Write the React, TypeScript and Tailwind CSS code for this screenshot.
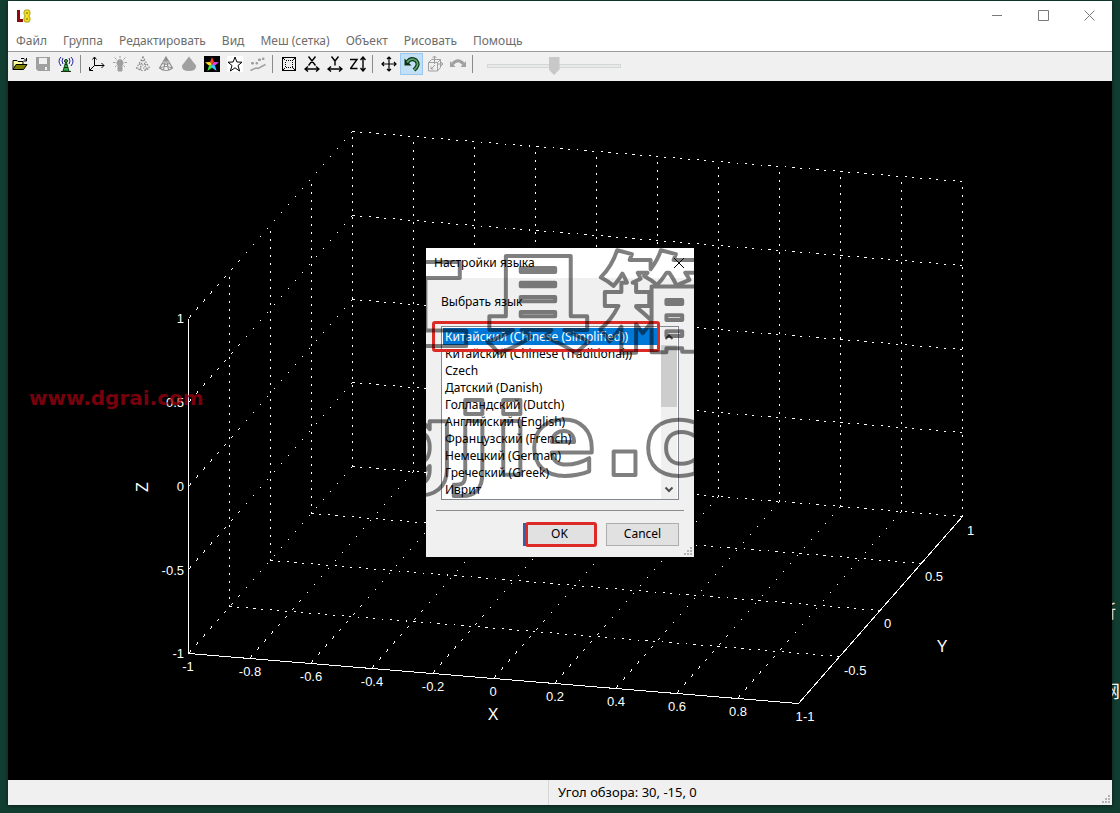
import { useState, type ReactNode } from 'react';
import clsx from 'clsx';

const MENU = ['Файл', 'Группа', 'Редактировать', 'Вид', 'Меш (сетка)', 'Объект', 'Рисовать', 'Помощь'];

const LANGUAGES = [
  'Китайский (Chinese (Simplified))',
  'Китайский (Chinese (Traditional))',
  'Czech',
  'Датский (Danish)',
  'Голландский (Dutch)',
  'Английский (English)',
  'Французский (French)',
  'Немецкий (German)',
  'Греческий (Greek)',
  'Иврит',
];

interface Tool {
  id: string;
  label: string;
  icon: ReactNode;
  active?: boolean;
}

const STAR = 'M8 1 L9.9 6 L15 6.2 L11 9.5 L12.6 15 L8 11.8 L3.4 15 L5 9.5 L1 6.2 L6.1 6 Z';

const TOOL_GROUPS: Tool[][] = [
  [
    {
      id: 'open',
      label: 'Открыть',
      icon: (
        <g stroke="#000">
          <path d="M1 13.5V4.5H5L6 5.5H11V8" fill="#ffff9c" />
          <path d="M1 13.5L4 8.5H15L11.500 13.500Z" fill="#808000" />
          <path d="M9 2.500H12L14 4.500M14.500 2V5H11.500" fill="none" />
        </g>
      ),
    },
    {
      id: 'save',
      label: 'Сохранить',
      icon: (
        <g>
          <path d="M1 1H15V15H3L1 13Z" fill="#a0a0a0" />
          <path d="M4 2H12V8H4ZM10 11H12V14H10Z" fill="#f0f0f0" />
        </g>
      ),
    },
    {
      id: 'antenna',
      label: 'Подключить',
      icon: (
        <g fill="none">
          <path d="M8 5L5 15H11Z" fill="#30b040" stroke="#124a20" />
          <path d="M3 15.500H13M6 11.500H10M7 8.500H9" stroke="#103010" />
          <circle cx="8" cy="5" r="1.500" fill="#40c050" stroke="#103010" />
          <path d="M5 8Q3 5 5 2M11 8Q13 5 11 2M3 10Q-1 5 3 1M13 10Q17 5 13 1" stroke="#2020a0" />
        </g>
      ),
    },
  ],
  [
    {
      id: 'axes',
      label: 'Оси',
      icon: (
        <path
          d="M5.500 1V9.500H15M5.500 9.500L1 14M3.500 3.500L5.500 1L7.500 3.500M12.500 7L15 9.500L12.500 12M0.500 11V14.500H4"
          fill="none"
          stroke="#000"
        />
      ),
    },
    {
      id: 'light',
      label: 'Свет',
      icon: (
        <g stroke="#a0a0a0" fill="#a0a0a0">
          <path d="M8 3.500A3.500 3.500 0 0 1 10 9.500V15H6V9.500A3.500 3.500 0 0 1 8 3.500Z" />
          <path d="M8 0V2M2.500 1.500L4.500 3.500M13.500 1.500L11.500 3.500M1 6.500H3.500M12.500 6.500H15M3 11L4.500 9.500M13 11L11.500 9.500" />
        </g>
      ),
    },
    {
      id: 'points',
      label: 'Точки',
      icon: (
        <path
          d="M8 1L1.500 12Q8 17 14.500 12ZM8 1L5 14M8 1L11 14M4 8Q8 10 12 8M2 12H14"
          fill="none"
          stroke="#888"
          strokeWidth="1.200"
          strokeDasharray="1.500 1.500"
        />
      ),
    },
    {
      id: 'wire',
      label: 'Каркас',
      icon: (
        <path
          d="M8 1L1.500 12Q8 17 14.500 12ZM8 1L5.500 14M8 1L10.500 14M4.500 7.500Q8 9 11.500 7.500M2 12Q8 9 14 12"
          fill="none"
          stroke="#909090"
          strokeWidth="1.200"
        />
      ),
    },
    {
      id: 'solid',
      label: 'Заливка',
      icon: <path d="M8 0.500L1 9.500Q0.500 15 8 15Q15.500 15 15 9.500Z" fill="#a0a0a0" />,
    },
    {
      id: 'colour',
      label: 'Цвет',
      icon: (
        <g>
          <path d="M0 0H16V16H0Z" fill="#000" />
          <path d="M8 1L10 6L8 8.500L6 6Z" fill="#ff4020" />
          <path d="M10 6L15 6.200L11 9.500L8 8.500Z" fill="#e040e0" />
          <path d="M11 9.500L12.600 15L8 11.800V8.500Z" fill="#40c0ff" />
          <path d="M8 11.800L3.400 15L5 9.500L8 8.500Z" fill="#40e040" />
          <path d="M5 9.500L1 6.200L6 6L8 8.500Z" fill="#ffe020" />
        </g>
      ),
    },
    {
      id: 'star',
      label: 'Контур',
      icon: (
        <g>
          <path d="M0 0H16V16H0Z" fill="#fff" />
          <path d={STAR} fill="none" stroke="#000" />
        </g>
      ),
    },
    {
      id: 'fit',
      label: 'Аппроксимация',
      icon: (
        <g fill="#a0a0a0" stroke="#a0a0a0">
          <path d="M0.500 14.500L6 12L8 12.500L15.500 8.500" fill="none" strokeWidth="1.500" />
          <path d="M1.500 6.500H3.500V8H1.500ZM6 6.500H7.500V8H6ZM8.500 3H10.500V4.500H8.500ZM12.500 2H14V3.500H12.500Z" />
        </g>
      ),
    },
  ],
  [
    {
      id: 'frame',
      label: 'Рамка',
      icon: (
        <g fill="none" stroke="#000" shapeRendering="crispEdges">
          <path d="M1.500 1.500H14.500V14.500H1.500Z" />
          <path d="M4.500 4.500H11.500V11.500H4.500Z" strokeDasharray="1 1" />
          <path d="M2 2L5 5M14 2L11 5M2 14L5 11M14 14L11 11" strokeDasharray="1 1" />
        </g>
      ),
    },
    {
      id: 'x',
      label: 'Поворот X',
      icon: <path d="M4.500 0.500L11.500 9.500M11.500 0.500L4.500 9.500M1 13H15M4 10.500L1 13L4 15.500M12 10.500L15 13L12 15.500" fill="none" stroke="#000" strokeWidth="1.400" />,
    },
    {
      id: 'y',
      label: 'Поворот Y',
      icon: <path d="M4.500 0.500L8 5L11.500 0.500M8 5V9.500M1 13H15M4 10.500L1 13L4 15.500M12 10.500L15 13L12 15.500" fill="none" stroke="#000" strokeWidth="1.400" />,
    },
    {
      id: 'z',
      label: 'Поворот Z',
      icon: <path d="M0 3.500H7L0.500 12.500H7.500M13 1V15M10.500 4L13 1L15.500 4M10.500 12L13 15L15.500 12" fill="none" stroke="#000" strokeWidth="1.400" />,
    },
  ],
  [
    {
      id: 'move',
      label: 'Сдвиг',
      icon: <path d="M8 1V15M1 8H15M6 3L8 1L10 3M6 13L8 15L10 13M3 6L1 8L3 10M13 6L15 8L13 10" fill="none" stroke="#000" strokeWidth="1.200" />,
    },
    {
      id: 'rotate',
      label: 'Вращение',
      active: true,
      icon: (
        <g fill="none">
          <path d="M3 6.500Q7 1 12 4.500Q16 9 10 14" stroke="#0c3018" strokeWidth="4" />
          <path d="M0.500 2.500V9.500H7.500Z" fill="#0c3018" />
          <path d="M3 6.500Q7 1 12 4.500Q16 9 10 14" stroke="#58a868" strokeWidth="1.800" />
        </g>
      ),
    },
    {
      id: 'cube',
      label: 'Куб',
      icon: (
        <path
          d="M1.500 6.500H10.500V15H1.500ZM1.500 6.500L4.500 3.500H13.500V11.500L10.500 15M10.500 6.500L13.500 3.500M7.500 0V8M5.500 2L7.500 0L9.500 2M11 8H15.500M14 6L16 8L14 10M4 13L8 9M4 10.500V13H6.500"
          fill="none"
          stroke="#a0a0a0"
        />
      ),
    },
    {
      id: 'redo',
      label: 'Повторить',
      icon: (
        <g fill="#a0a0a0">
          <path d="M0 5V11H5.500ZM16 5V11H10.500Z" />
          <path d="M2.500 8Q8 1.500 13.500 8" fill="none" stroke="#a0a0a0" strokeWidth="3" />
        </g>
      ),
    },
  ],
];

type Point = [number, number];

// Corners of the projected box
const FRONT_LEFT: Point = [188, 653];
const FRONT_RIGHT: Point = [798, 703];
const BACK_LEFT: Point = [352, 466];
const BACK_RIGHT: Point = [962, 516];
const BOX_HEIGHT = 335;

const lerp = (a: Point, b: Point, t: number): Point => [a[0] + (b[0] - a[0]) * t, a[1] + (b[1] - a[1]) * t];
const up = (p: Point, t: number): Point => [p[0], p[1] - BOX_HEIGHT * t];
const steps = (n: number) => Array.from({ length: n + 1 }, (_, i) => i / n);

function GridLine({ from, to }: { from: Point; to: Point }) {
  const dx = Math.abs(to[0] - from[0]);
  const dy = Math.abs(to[1] - from[1]);
  // the stipple repeats every 8 units of the longer axis
  const k = Math.hypot(dx, dy) / Math.max(dx, dy);
  return (
    <line
      x1={Math.round(from[0]) + 0.5}
      y1={Math.round(from[1]) + 0.5}
      x2={Math.round(to[0]) + 0.5}
      y2={Math.round(to[1]) + 0.5}
      strokeDasharray={`${2 * k} ${6 * k}`}
    />
  );
}

const X_LABELS: [string, number, number][] = [
  ['-1', 188, 671],
  ['-0.8', 250, 676],
  ['-0.6', 311, 681],
  ['-0.4', 372, 686],
  ['-0.2', 433, 691],
  ['0', 493, 696],
  ['0.2', 555, 701],
  ['0.4', 616, 706],
  ['0.6', 677, 711],
  ['0.8', 738, 716],
  ['1', 799, 721],
];
const Y_LABELS: [string, number, number][] = [
  ['-1', 803, 721],
  ['-0.5', 844, 675],
  ['0', 884, 628],
  ['0.5', 925, 581],
  ['1', 967, 535],
];
const Z_LABELS: [string, number, number][] = [
  ['1', 184, 323],
  ['0.5', 184, 407],
  ['0', 184, 491],
  ['-0.5', 184, 575],
  ['-1', 184, 658],
];

function Plot() {
  return (
    <svg viewBox="8 81 1104 699" className="block w-full font-['Liberation_Sans',sans-serif]" role="img" aria-label="3D">
      <g stroke="#fff" shapeRendering="crispEdges">
        {steps(10).map(t => (
          <g key={t}>
            <GridLine from={lerp(BACK_LEFT, BACK_RIGHT, t)} to={up(lerp(BACK_LEFT, BACK_RIGHT, t), 1)} />
            <GridLine from={lerp(BACK_LEFT, BACK_RIGHT, t)} to={lerp(FRONT_LEFT, FRONT_RIGHT, t)} />
          </g>
        ))}
        {steps(4).map(t => (
          <g key={t}>
            <GridLine from={lerp(FRONT_LEFT, BACK_LEFT, t)} to={up(lerp(FRONT_LEFT, BACK_LEFT, t), 1)} />
            <GridLine from={lerp(FRONT_LEFT, BACK_LEFT, t)} to={lerp(FRONT_RIGHT, BACK_RIGHT, t)} />
            <GridLine from={up(BACK_LEFT, t)} to={up(BACK_RIGHT, t)} />
            <GridLine from={up(BACK_LEFT, t)} to={up(FRONT_LEFT, t)} />
          </g>
        ))}
        <path d="M188.500 318.500V653.500L798.500 703.500L962.500 516.500" fill="none" />
      </g>
      <g fill="#fff" fontSize="13">
        {X_LABELS.map(([text, x, y]) => (
          <text key={text} x={x} y={y} textAnchor="middle">{text}</text>
        ))}
        {Y_LABELS.map(([text, x, y]) => (
          <text key={text} x={x} y={y}>{text}</text>
        ))}
        {Z_LABELS.map(([text, x, y]) => (
          <text key={text} x={x} y={y} textAnchor="end">{text}</text>
        ))}
        <g fontSize="16">
          <text x="493" y="720" textAnchor="middle">X</text>
          <text x="942" y="652" textAnchor="middle">Y</text>
          <text transform="translate(148 487) rotate(-90)" textAnchor="middle">Z</text>
        </g>
      </g>
      <text x="29" y="405" fontSize="20" fontWeight="700" fill="#a00012" fillOpacity="0.75" className="font-['DejaVu_Sans',sans-serif]">
        www.dgrai.com
      </text>
    </svg>
  );
}

function Grip() {
  return (
    <svg viewBox="0 0 10 10" className="size-[10px]" fill="#b4b4b4" aria-hidden="true">
      <path d="M7 1h2v2h-2zM4 4h2v2h-2zM7 4h2v2h-2zM1 7h2v2h-2zM4 7h2v2h-2zM7 7h2v2h-2z" />
    </svg>
  );
}

function Toolbar() {
  const [size, setSize] = useState(50);
  return (
    <div className="flex h-[30px] items-start border-t border-[#9b9b9b] bg-[#f0f0f0] pt-px">
      {TOOL_GROUPS.map((group, i) => (
        <div key={i} className="flex items-center">
          {group.map(tool => (
            <button
              key={tool.id}
              type="button"
              aria-label={tool.label}
              className={clsx(
                'flex h-[22px] w-[23px] items-center justify-center border',
                tool.active ? 'border-[#99c8ee] bg-[#c3dff5]' : 'border-transparent',
              )}
            >
              <svg viewBox="0 0 16 16" className="size-4 shrink-0" aria-hidden="true">{tool.icon}</svg>
            </button>
          ))}
          <span className="ml-[3px] mr-1 h-[18px] w-px bg-[#8a8a8a]" />
        </div>
      ))}
      <input
        type="range"
        aria-label="Размер"
        value={size}
        onChange={e => setSize(Number(e.target.value))}
        className="ml-[10px] mt-[3px] h-5 w-[134px] appearance-none bg-transparent [&::-webkit-slider-runnable-track]:h-1 [&::-webkit-slider-runnable-track]:border [&::-webkit-slider-runnable-track]:border-[#d6d6d6] [&::-webkit-slider-runnable-track]:bg-[#e7eaea] [&::-webkit-slider-thumb]:-mt-2 [&::-webkit-slider-thumb]:h-[18px] [&::-webkit-slider-thumb]:w-[11px] [&::-webkit-slider-thumb]:appearance-none [&::-webkit-slider-thumb]:bg-[#c8c8c8] [&::-webkit-slider-thumb]:[clip-path:polygon(0_0,100%_0,100%_70%,50%_100%,0_70%)]"
      />
    </div>
  );
}

function LanguageDialog() {
  const [language, setLanguage] = useState(LANGUAGES[0]);
  return (
    <div role="dialog" aria-labelledby="dialog-title" className="relative w-[268px] overflow-hidden bg-[#f0f0f0] text-[12px] text-black">
      <div className="flex h-[30px] items-center justify-between bg-white pl-2">
        <h2 id="dialog-title">Настройки языка</h2>
        <button type="button" aria-label="Закрыть" className="flex size-[30px] items-center justify-center">
          <svg viewBox="0 0 10 10" className="size-[10px]" stroke="#000" aria-hidden="true">
            <path d="M0 0L10 10M10 0L0 10" />
          </svg>
        </button>
      </div>

      <div className="px-[15px] pt-[15px]">
        <label htmlFor="language" className="block leading-[18px]">Выбрать язык</label>
        <div className="relative mt-[15px] flex border border-[#828790] bg-white">
          <select
            id="language"
            size={10}
            value={language}
            onChange={e => setLanguage(e.target.value)}
            className="h-[172px] min-w-0 flex-1 overflow-hidden p-px outline-none [scrollbar-width:none]"
          >
            {LANGUAGES.map(name => (
              <option key={name} value={name} className="h-[17px] px-[2px] py-0 leading-[17px] text-black checked:bg-[linear-gradient(#0078d7,#0078d7)] checked:text-white">
                {name}
              </option>
            ))}
          </select>
          {/* Scroll bar */}
          <div className="mr-px flex w-4 flex-col items-center bg-[#f0f0f0]" aria-hidden="true">
            <svg viewBox="0 0 16 18" className="h-[18px] w-4" fill="none" stroke="#505050" strokeWidth="2">
              <path d="M4.500 12L8 8.500L11.500 12" />
            </svg>
            <span className="h-[62px] w-full bg-[#cdcdcd]" />
            <svg viewBox="0 0 16 18" className="mt-auto h-[18px] w-4" fill="none" stroke="#505050" strokeWidth="2">
              <path d="M4.500 6.500L8 10L11.500 6.500" />
            </svg>
          </div>
          <span className="pointer-events-none absolute -left-[10px] -top-[6px] h-[31px] w-[228px] rounded-[3px] border-3 border-[#dc2a27]" />
        </div>
      </div>

      <div className="mx-[10px] mt-[10px] h-px bg-[#8c8c8c]" />

      <div className="flex justify-end gap-[10px] px-[15px] pb-[11px] pt-3">
        <button type="button" className="relative h-[23px] w-[73px] border-2 border-[#3a5da8] bg-[#e1e1e1]">
          OK
          <span className="absolute -inset-y-[3px] -right-[3px] left-0 rounded-[3px] border-3 border-[#dc2a27]" />
        </button>
        <button type="button" className="h-[23px] w-[73px] border border-[#adadad] bg-[#e1e1e1]">Cancel</button>
      </div>

      <svg
        viewBox="426 248 268 309"
        className="pointer-events-none absolute inset-0 size-full"
        fill="none"
        stroke="#000"
        strokeOpacity="0.5"
        strokeWidth="4"
        strokeLinejoin="round"
        aria-hidden="true"
      >
        <g fontSize="106" fontWeight="900" className="font-['Noto_Sans_CJK_SC',sans-serif]">
          <text x="364" y="342">工</text>
          <text x="485" y="342">具</text>
          <text x="599" y="342">箱</text>
        </g>
        <g fontSize="98" fontWeight="700" className="font-['DejaVu_Sans',sans-serif]">
          <text x="385" y="475">g</text>
          <text x="457" y="475">j</text>
          <text x="495" y="475">i</text>
          <text x="530" y="475">e</text>
          <text x="601" y="475" fontSize="124">.</text>
          <text x="644" y="475">c</text>
        </g>
      </svg>
      <div className="absolute bottom-px right-px"><Grip /></div>
    </div>
  );
}

export default function App() {
  return (
    <div className="relative flex min-h-screen flex-col overflow-hidden bg-[#123d31] px-2 pb-2 pt-px font-['Noto_Sans',sans-serif]">
      {/* Desktop labels behind the window */}
      <span className="absolute right-[4px] top-[600px] text-[18px] leading-5 text-white font-['Noto_Sans_CJK_SC',sans-serif]">所</span>
      <span className="absolute right-0 top-[680px] text-[18px] leading-5 text-white font-['Noto_Sans_CJK_SC',sans-serif]">网</span>

      <main className="relative flex flex-1 flex-col bg-white shadow-[0_1px_4px_rgba(0,0,0,0.5)]">
        <div className="flex h-[29px] items-center justify-between pl-2">
          <svg viewBox="0 0 16 16" className="size-4" aria-hidden="true">
            <path d="M1 2H4V11H7V14H1Z" fill="#8c0a10" />
            <path d="M9 2H13L14 4V6L13 8L14 10V12L13 14H9L8 12V10L9 8L8 6V4Z" fill="#f0e020" stroke="#b0a020" />
            <path d="M10 5H12M10 11H12" stroke="#6c6010" />
          </svg>
          <div className="flex text-[#7a7a7a]">
            <button type="button" aria-label="Свернуть" className="flex h-7 w-[46px] items-center justify-center">
              <svg viewBox="0 0 11 11" className="size-[11px]" stroke="currentColor"><path d="M0 5.500H10" /></svg>
            </button>
            <button type="button" aria-label="Развернуть" className="flex h-7 w-[46px] items-center justify-center">
              <svg viewBox="0 0 11 11" className="size-[11px]" fill="none" stroke="currentColor"><path d="M0.500 0.500H10.500V10.500H0.500Z" /></svg>
            </button>
            <button type="button" aria-label="Закрыть" className="flex h-7 w-[46px] items-center justify-center">
              <svg viewBox="0 0 11 11" className="size-[11px]" stroke="currentColor"><path d="M0.500 0.500L10.500 10.500M10.500 0.500L0.500 10.500" /></svg>
            </button>
          </div>
        </div>

        <nav className="flex h-[21px] items-center text-[12px] text-[#6d6d6d]">
          {MENU.map(item => (
            <button key={item} type="button" className="px-2">{item}</button>
          ))}
        </nav>

        <Toolbar />

        <div className="flex flex-1 items-center bg-black">
          <Plot />
        </div>

        <footer className="relative flex h-[25px] items-center bg-[#f0f0f0] text-[13px] text-black">
          <span className="h-full w-[49%] border-r border-[#d7d7d7]" />
          <span className="pl-[9px]">Угол обзора: 30, -15, 0</span>
          <div className="absolute bottom-px right-px"><Grip /></div>
        </footer>

        <div className="pointer-events-none absolute inset-0 flex items-center justify-center pb-[2px]">
          <div className="pointer-events-auto">
            <LanguageDialog />
          </div>
        </div>
      </main>
    </div>
  );
}
